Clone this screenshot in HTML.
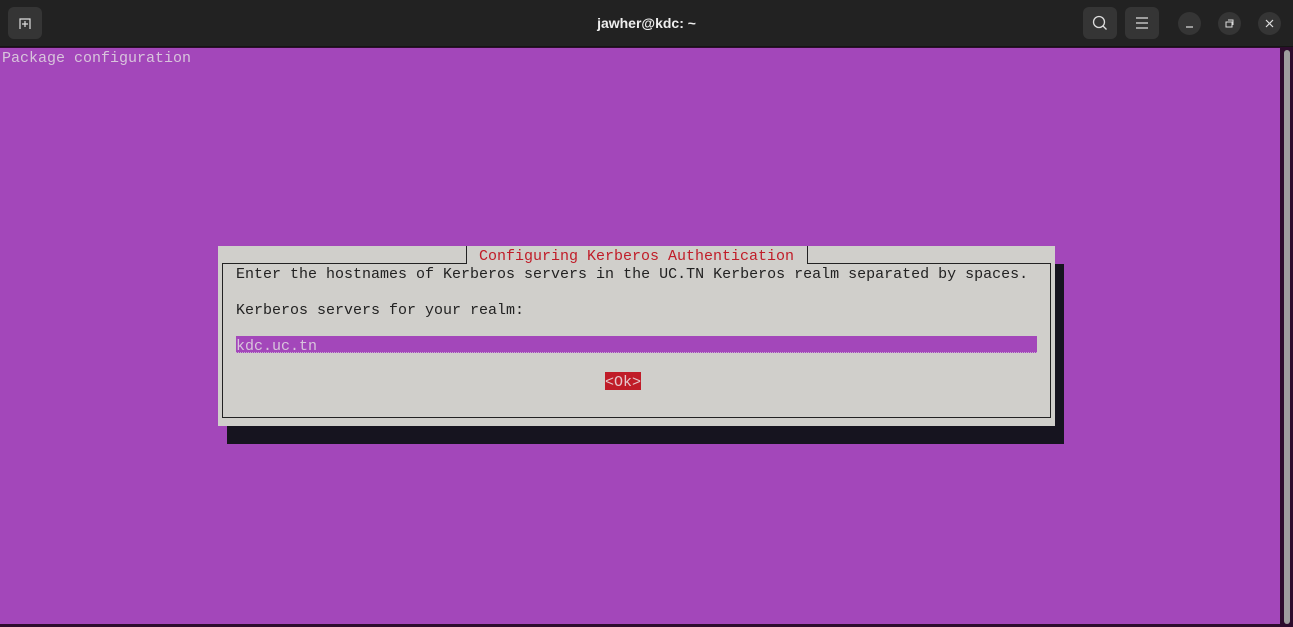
<!DOCTYPE html>
<html><head><meta charset="utf-8"><style>
*{margin:0;padding:0;box-sizing:border-box}
body{width:1293px;height:627px;background:#2d0c2d;position:relative;overflow:hidden;font-family:"Liberation Mono",monospace;font-size:15px}
.tb{position:absolute;left:0;top:0;width:1293px;height:47px;background:#222;border-bottom:1px solid #151515}
.btn{position:absolute;top:7px;width:34px;height:32px;background:#353535;border-radius:6px}
.cb{position:absolute;top:12px;width:23px;height:23px;background:#353535;border-radius:50%}
.title{position:absolute;top:0;left:0;width:1293px;text-align:center;line-height:46px;color:#eee;font-family:"Liberation Sans",sans-serif;font-weight:bold;font-size:14px}
.term{position:absolute;left:0;top:48px;width:1280px;height:576px;background:#a347ba}
.t{position:absolute;white-space:pre;line-height:18px;height:18px;padding-top:2px}
</style></head><body>
<div class="tb">
<div class="btn" style="left:8px"><svg width="34" height="32"><path d="M12 22V12h10v10M17 14v6M14 17h6" stroke="#ddd" stroke-width="1.2" fill="none"/></svg></div>
<div class="title">jawher@kdc: ~</div>
<div class="btn" style="left:1083px"><svg width="34" height="32"><circle cx="16" cy="15" r="5.5" stroke="#ddd" stroke-width="1.3" fill="none"/><path d="M20 19l3.5 3.5" stroke="#ddd" stroke-width="1.3"/></svg></div>
<div class="btn" style="left:1125px"><svg width="34" height="32"><path d="M11 11h12M11 16h12M11 21h12" stroke="#ddd" stroke-width="1.2"/></svg></div>
<div class="cb" style="left:1178px"><svg width="23" height="23"><path d="M8 15h7" stroke="#ddd" stroke-width="1.2"/></svg></div>
<div class="cb" style="left:1218px"><svg width="23" height="23"><rect x="8" y="10" width="6" height="5" stroke="#ddd" fill="none"/><path d="M10 8h5v5" stroke="#ddd" fill="none"/></svg></div>
<div class="cb" style="left:1258px"><svg width="23" height="23"><path d="M8 8l7 7M15 8l-7 7" stroke="#ddd" stroke-width="1.2"/></svg></div>
</div>
<div class="term"></div>
<div style="position:absolute;left:1284px;top:50px;width:6px;height:574px;background:#9d9d9d;border-radius:3px"></div>
<div class="t" style="left:2px;top:48px;color:#d8c4dc">Package configuration</div>
<div style="position:absolute;left:227px;top:264px;width:837px;height:180px;background:#16141f"></div>
<div style="position:absolute;left:218px;top:246px;width:837px;height:180px;background:#d0cfcb"></div>
<div style="position:absolute;left:222px;top:263px;width:829px;height:155px;border:1px solid #222"></div>
<div style="position:absolute;left:466px;top:246px;width:342px;height:18px;background:#d0cfcb;border-left:1px solid #222;border-right:1px solid #222"></div>
<div class="t" style="left:479px;top:246px;color:#c01c28">Configuring Kerberos Authentication</div>
<div class="t" style="left:236px;top:264px;color:#222">Enter the hostnames of Kerberos servers in the UC.TN Kerberos realm separated by spaces.</div>
<div class="t" style="left:236px;top:300px;color:#222">Kerberos servers for your realm:</div>
<div style="position:absolute;left:236px;top:336px;width:801px;height:17px;background:#a347ba;border-bottom:1px dotted #c9a6d2"></div>
<div class="t" style="left:236px;top:336px;color:#d8c4dc">kdc.uc.tn</div>
<div style="position:absolute;left:605px;top:372px;width:36px;height:18px;background:#c01c28"></div>
<div class="t" style="left:605px;top:372px;color:#e6c8cc">&lt;Ok&gt;</div>
</body></html>
